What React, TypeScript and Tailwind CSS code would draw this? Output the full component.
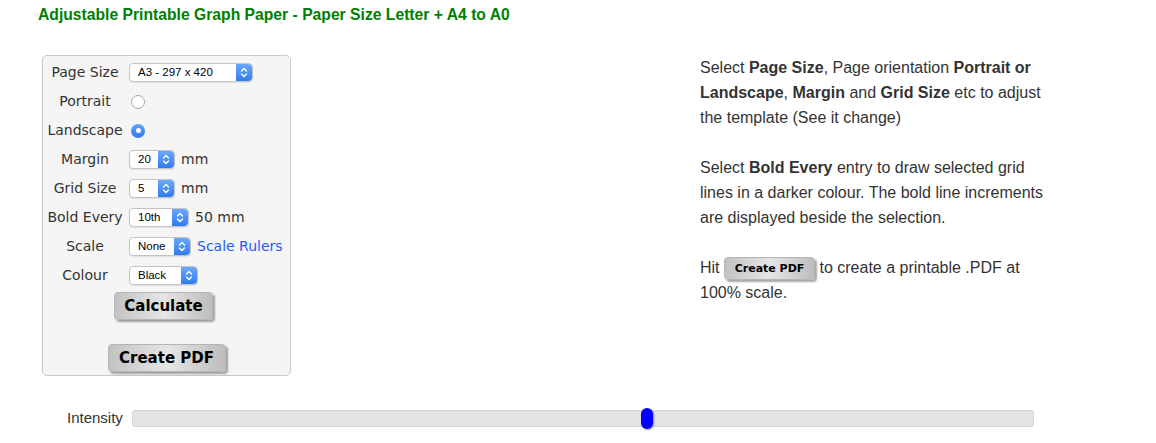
import React from 'react'

const verdana = { fontFamily: '"DejaVu Sans", Verdana, sans-serif' }

function Stepper() {
    return (
        <span className="flex h-full w-[16px] items-center justify-center rounded-r-[4px] bg-gradient-to-b from-[#6aa8fb] to-[#2f7cf0]">
            <svg width="8" height="11" viewBox="0 0 8 11" fill="none" stroke="white" strokeWidth="1.4" strokeLinecap="round" strokeLinejoin="round">
                <path d="M1.5 4 L4 1.5 L6.5 4" />
                <path d="M1.5 7 L4 9.5 L6.5 7" />
            </svg>
        </span>
    )
}

function Select({ value, width }: { value: string; width: string }) {
    return (
        <div
            className={`flex h-[19px] ${width} items-center justify-between rounded-[4px] border border-[#c4c4c4] bg-white text-[11.5px] text-black shadow-[0_1px_1px_rgba(0,0,0,0.08)]`}
            style={{ fontFamily: '"Liberation Sans", Arial, sans-serif' }}
        >
            <span className="pl-[8px]">{value}</span>
            <Stepper />
        </div>
    )
}

function Radio({ checked }: { checked?: boolean }) {
    if (checked) {
        return (
            <span className="ml-[2px] flex h-[14px] w-[14px] items-center justify-center rounded-full bg-gradient-to-b from-[#5ea2fa] to-[#2c7bf2]">
                <span className="h-[5px] w-[5px] rounded-full bg-white" />
            </span>
        )
    }
    return <span className="ml-[2px] block h-[14px] w-[14px] rounded-full border border-[#a8a8a8] bg-white" />
}

function Row({ label, children }: { label: string; children: React.ReactNode }) {
    return (
        <div className="flex h-[29px] items-center">
            <div className="w-[80px] text-center">{label}</div>
            <div className="ml-[4px] flex items-center gap-[6px]">{children}</div>
        </div>
    )
}

function GrayButton({ children, className }: { children: React.ReactNode; className: string }) {
    return (
        <button
            className={`rounded-[4px] border border-[#b5b5b5] bg-gradient-to-r from-[#c2c2c2] via-[#e6e6e6] to-[#bdbdbd] font-bold text-black shadow-[2px_2px_2px_rgba(0,0,0,0.35)] ${className}`}
            style={verdana}
        >
            {children}
        </button>
    )
}

export default function App() {
    return (
        <div className="h-[443px] w-[1156px] bg-white" style={{ fontFamily: '"Liberation Sans", Arial, sans-serif' }}>
            <h1 className="pl-[38px] pt-[5px] text-[15.7px] font-bold leading-[20px] text-[#008000]">
                Adjustable Printable Graph Paper - Paper Size Letter + A4 to A0
            </h1>

            <div className="mt-[30px] flex pl-[42px]">
                <div
                    className="flex h-[321px] w-[249px] flex-col rounded-[5px] border border-[#c9c9c9] bg-[#f5f5f5] pl-[2px] pt-[2px] text-[14px] text-[#333]"
                    style={verdana}
                >
                    <Row label="Page Size">
                        <Select value="A3 - 297 x 420" width="w-[124px]" />
                    </Row>
                    <Row label="Portrait">
                        <Radio />
                    </Row>
                    <Row label="Landscape">
                        <Radio checked />
                    </Row>
                    <Row label="Margin">
                        <Select value="20" width="w-[46px]" />
                        <span>mm</span>
                    </Row>
                    <Row label="Grid Size">
                        <Select value="5" width="w-[46px]" />
                        <span>mm</span>
                    </Row>
                    <Row label="Bold Every">
                        <Select value="10th" width="w-[60px]" />
                        <span>50 mm</span>
                    </Row>
                    <Row label="Scale">
                        <Select value="None" width="w-[62px]" />
                        <span className="text-[#1f5cf5]">Scale Rulers</span>
                    </Row>
                    <Row label="Colour">
                        <Select value="Black" width="w-[69px]" />
                    </Row>
                    <div className="mt-[2px] flex flex-col items-center pr-[8px]">
                        <GrayButton className="h-[28px] w-[99px] text-[15px]">Calculate</GrayButton>
                        <GrayButton className="ml-[6px] mt-[24px] h-[28px] w-[118px] text-[15px]">Create PDF</GrayButton>
                    </div>
                </div>

                <div className="ml-[409px] w-[352px] text-[16px] leading-[25px] text-[#333]">
                    <p>
                        Select <b>Page Size</b>, Page orientation <b>Portrait or Landscape</b>, <b>Margin</b> and{' '}
                        <b>Grid Size</b> etc to adjust the template (See it change)
                    </p>
                    <p className="mt-[25px]">
                        Select <b>Bold Every</b> entry to draw selected grid lines in a darker colour. The bold line
                        increments are displayed beside the selection.
                    </p>
                    <p className="mt-[25px]">
                        Hit{' '}
                        <GrayButton className="inline-block h-[23px] w-[91px] align-middle text-[11px] leading-[21px]">
                            Create PDF
                        </GrayButton>{' '}
                        to create a printable .PDF at 100% scale.
                    </p>
                </div>
            </div>

            <div className="mt-[31px] flex items-center pl-[67px]">
                <span className="w-[65px] text-[15px] text-[#333]">Intensity</span>
                <div className="relative h-[17px] w-[902px] rounded-[3px] border border-[#d6d6d6] bg-[#e3e3e3]">
                    <span className="absolute left-[508px] top-[-3px] h-[21px] w-[12px] rounded-full bg-[#0000ff] shadow-[1px_1px_2px_rgba(0,0,0,0.4)]" />
                </div>
            </div>
        </div>
    )
}
